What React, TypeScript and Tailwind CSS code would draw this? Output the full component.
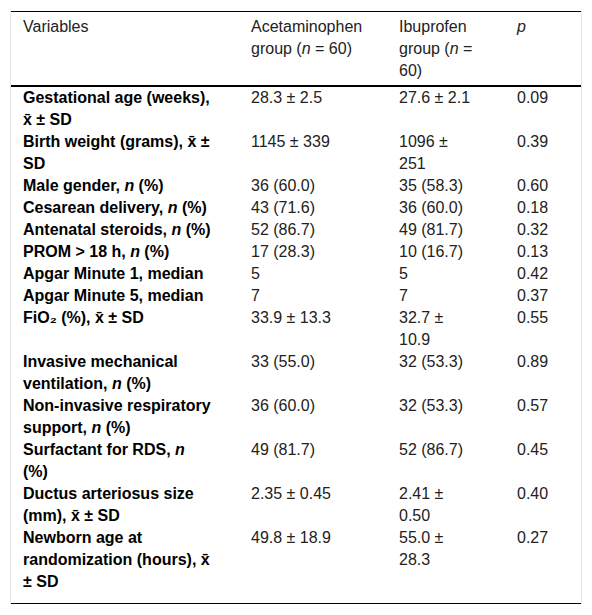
import React from 'react';

type Row = { label: React.ReactNode; a: React.ReactNode; b: React.ReactNode; p: string };

const N = () => <i>n</i>;

const rows: Row[] = [
  { label: <>Gestational age (weeks), x̄ ± SD</>, a: '28.3 ± 2.5', b: '27.6 ± 2.1', p: '0.09' },
  { label: <>Birth weight (grams), x̄ ± SD</>, a: '1145 ± 339', b: '1096 ± 251', p: '0.39' },
  { label: <>Male gender, <N /> (%)</>, a: '36 (60.0)', b: '35 (58.3)', p: '0.60' },
  { label: <>Cesarean delivery, <N /> (%)</>, a: '43 (71.6)', b: '36 (60.0)', p: '0.18' },
  { label: <>Antenatal steroids, <N /> (%)</>, a: '52 (86.7)', b: '49 (81.7)', p: '0.32' },
  { label: <>PROM &gt; 18 h, <N /> (%)</>, a: '17 (28.3)', b: '10 (16.7)', p: '0.13' },
  { label: <>Apgar Minute 1, median</>, a: '5', b: '5', p: '0.42' },
  { label: <>Apgar Minute 5, median</>, a: '7', b: '7', p: '0.37' },
  { label: <>FiO₂ (%), x̄ ± SD</>, a: '33.9 ± 13.3', b: '32.7 ± 10.9', p: '0.55' },
  { label: <>Invasive mechanical ventilation, <N /> (%)</>, a: '33 (55.0)', b: '32 (53.3)', p: '0.89' },
  { label: <>Non-invasive respiratory support, <N /> (%)</>, a: '36 (60.0)', b: '32 (53.3)', p: '0.57' },
  { label: <>Surfactant for RDS, <N /> (%)</>, a: '49 (81.7)', b: '52 (86.7)', p: '0.45' },
  { label: <>Ductus arteriosus size (mm), x̄ ± SD</>, a: '2.35 ± 0.45', b: '2.41 ± 0.50', p: '0.40' },
  { label: <>Newborn age at randomization (hours), x̄ ± SD</>, a: '49.8 ± 18.9', b: '55.0 ± 28.3', p: '0.27' },
];

export default function App() {
  return (
    <div
      className="min-h-[615px] bg-white px-[10px] pt-[10px] text-[16px] leading-[22px] text-[#222]"
      style={{ fontFamily: '"Liberation Sans", Arial, sans-serif' }}
    >
      <div className="border-x border-[#e6e6e6] pt-px">
        <table className="w-full table-fixed border-collapse text-left">
          <colgroup>
            <col className="w-[228px]" />
            <col className="w-[148px]" />
            <col className="w-[118px]" />
            <col />
          </colgroup>
          <thead>
            <tr className="border-t border-b-2 border-black align-top">
              <th className="pl-3 pr-[27px] pt-[4px] pb-[3px] font-normal">Variables</th>
              <th className="px-3 pt-[4px] pb-[3px] font-normal">
                Acetaminophen group (<i>n</i> = 60)
              </th>
              <th className="pl-3 pr-[31px] pt-[4px] pb-[3px] font-normal">
                Ibuprofen group (<i>n</i> = 60)
              </th>
              <th className="pl-3 pt-[4px] pb-[3px] font-normal">
                <i>p</i>
              </th>
            </tr>
          </thead>
          <tbody className="border-b border-black">
            {rows.map((r, i) => {
              const last = i === rows.length - 1;
              const py = last ? 'pb-[10px]' : '';
              return (
                <tr key={i} className="align-top">
                  <td className={`pl-3 pr-[27px] font-bold text-black ${py}`}>{r.label}</td>
                  <td className={`px-3 ${py}`}>{r.a}</td>
                  <td className={`pl-3 pr-[31px] ${py}`}>{r.b}</td>
                  <td className={`pl-3 ${py}`}>{r.p}</td>
                </tr>
              );
            })}
          </tbody>
        </table>
      </div>
    </div>
  );
}
